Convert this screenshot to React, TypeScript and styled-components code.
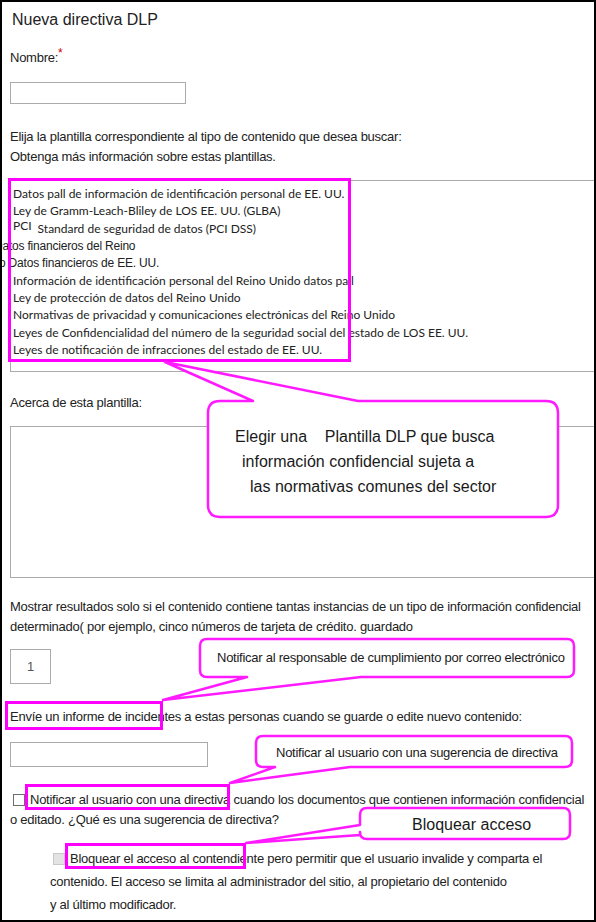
import React from 'react'
import styled, { createGlobalStyle } from 'styled-components'

const GlobalStyle = createGlobalStyle`
    html, body {
        margin: 0;
        padding: 0;
        background: #fff;
    }
    body {
        font-family: "Liberation Sans", Arial, sans-serif;
        color: #222;
    }
`

const Frame = styled.div`
    position: relative;
    width: 596px;
    height: 922px;
    box-sizing: border-box;
    border: 2px solid #000;
    overflow: hidden;
    background: #fff;
`

const Content = styled.div`
    display: flex;
    flex-direction: column;
    align-items: flex-start;
    padding-left: 8px;
    font-size: 13px;
    letter-spacing: -0.25px;
`

const Title = styled.h1`
    margin: 7px 0 0 2px;
    font-size: 16px;
    line-height: 22px;
    font-weight: normal;
    letter-spacing: 0;
`

const Text = styled.p<{ $mt: number; $lh?: number; $indent?: number }>`
    margin: ${p => p.$mt}px 0 0 ${p => p.$indent || 0}px;
    line-height: ${p => p.$lh || 20}px;
    white-space: nowrap;
`

const Required = styled.span`
    color: #c00;
    font-size: 12px;
    vertical-align: 5px;
    line-height: 0;
`

const Field = styled.div<{ $mt: number; $w: number; $h: number }>`
    margin-top: ${p => p.$mt}px;
    width: ${p => p.$w}px;
    height: ${p => p.$h}px;
    flex-shrink: 0;
    box-sizing: border-box;
    border: 1px solid #ababab;
    display: flex;
    align-items: center;
    justify-content: center;
    color: #555;
`

const ListBox = styled.div`
    display: flex;
    flex-direction: column;
    flex-shrink: 0;
    margin-top: 13px;
    width: 600px;
    height: 192px;
    box-sizing: border-box;
    border: 1px solid #ababab;
    border-right: none;
    padding: 4px 0 0 2px;
    font-family: Lato, "Open Sans", sans-serif;
    font-size: 12px;
    letter-spacing: 0;
`

const ListItem = styled.div<{ $shift?: number; $plain?: boolean }>`
    display: flex;
    align-items: center;
    height: 17.3px;
    white-space: nowrap;
    margin-left: ${p => p.$shift || 0}px;
    ${p => p.$plain && `
        font-family: "Liberation Sans", Arial, sans-serif;
        letter-spacing: -0.2px;
    `}
`

const Raised = styled.span`
    align-self: flex-start;
    margin: -1px 6px 0 0;
    line-height: 14px;
`

const CheckRow = styled.div<{ $mt: number; $lh: number; $indent: number }>`
    display: flex;
    flex-direction: column;
    margin: ${p => p.$mt}px 0 0 ${p => p.$indent}px;
    line-height: ${p => p.$lh}px;
    white-space: nowrap;
`

const FirstLine = styled.div`
    display: flex;
    align-items: center;
    gap: 5px;
    padding-left: 3px;
`

const Check = styled.span<{ $disabled?: boolean }>`
    width: 12px;
    height: 12px;
    flex-shrink: 0;
    box-sizing: border-box;
    border: 1px solid ${p => (p.$disabled ? '#c8c8c8' : '#6d6d6d')};
    background: ${p => (p.$disabled ? '#e3e3e3' : '#fff')};
`

const Highlight = styled.div<{ $x: number; $y: number; $w: number; $h: number }>`
    position: absolute;
    left: ${p => p.$x - 2}px;
    top: ${p => p.$y - 2}px;
    width: ${p => p.$w}px;
    height: ${p => p.$h}px;
    box-sizing: border-box;
    border: 3px solid #ff00ff;
    pointer-events: none;
`

const CalloutBox = styled.div<{ $x: number; $y: number; $w: number; $h: number }>`
    position: absolute;
    left: ${p => p.$x - 2}px;
    top: ${p => p.$y - 2}px;
    width: ${p => p.$w}px;
    height: ${p => p.$h}px;
`

const Bubble = styled.svg`
    position: absolute;
    left: 0;
    top: 0;
    overflow: visible;
`

const CalloutText = styled.div<{ $size: number; $lh: number; $top: number }>`
    position: relative;
    display: flex;
    flex-direction: column;
    padding-top: ${p => p.$top}px;
    font-size: ${p => p.$size}px;
    line-height: ${p => p.$lh}px;
    letter-spacing: ${p => (p.$size > 14 ? 0 : -0.25)}px;
    white-space: pre;
    color: #1a1a1a;
`

const CalloutLine = styled.div<{ $indent: number }>`
    padding-left: ${p => p.$indent}px;
`

type Tail = { side: 'top' | 'bottom' | 'left'; a: number; b: number; tx: number; ty: number }

// outline of a rounded box with its pointer, in the box's own coordinates
function bubblePath(w: number, h: number, r: number, t: Tail) {
    const top = t.side === 'top'
        ? `M ${r} 0 L ${t.a} 0 L ${t.tx} ${t.ty} L ${t.b} 0 L ${w - r} 0`
        : `M ${r} 0 L ${w - r} 0`
    const right = `Q ${w} 0 ${w} ${r} L ${w} ${h - r} Q ${w} ${h} ${w - r} ${h}`
    const bottom = t.side === 'bottom'
        ? `L ${t.b} ${h} L ${t.tx} ${t.ty} L ${t.a} ${h} L ${r} ${h}`
        : `L ${r} ${h}`
    const left = t.side === 'left'
        ? `Q 0 ${h} 0 ${h - r} L 0 ${t.b} L ${t.tx} ${t.ty} L 0 ${t.a} L 0 ${r} Q 0 0 ${r} 0 Z`
        : `Q 0 ${h} 0 ${h - r} L 0 ${r} Q 0 0 ${r} 0 Z`
    return `${top} ${right} ${bottom} ${left}`
}

interface CalloutProps {
    x: number
    y: number
    w: number
    h: number
    r: number
    tail: Tail
    size: number
    lh: number
    top: number
    lines: { text: string; indent: number }[]
}

function Callout({ x, y, w, h, r, tail, size, lh, top, lines }: CalloutProps) {
    return (
        <CalloutBox $x={x} $y={y} $w={w} $h={h}>
            <Bubble width={w} height={h}>
                <path d={bubblePath(w, h, r, tail)} fill="#fff" stroke="#ff1aff" strokeWidth={2.5} strokeLinejoin="round" />
            </Bubble>
            <CalloutText $size={size} $lh={lh} $top={top}>
                {lines.map((l, i) => (
                    <CalloutLine key={i} $indent={l.indent}>{l.text}</CalloutLine>
                ))}
            </CalloutText>
        </CalloutBox>
    )
}

const templates: { text: string; shift?: number; plain?: boolean; pci?: boolean }[] = [
    { text: 'Datos pall de información de identificación personal de EE. UU.' },
    { text: 'Ley de Gramm-Leach-Bliley de LOS EE. UU. (GLBA)' },
    { text: 'Standard de seguridad de datos (PCI DSS)', pci: true },
    { text: 'Datos financieros del Reino', shift: -19, plain: true },
    { text: 'o Datos financieros de EE. UU.', shift: -14, plain: true },
    { text: 'Información de identificación personal del Reino Unido datos pall' },
    { text: 'Ley de protección de datos del Reino Unido' },
    { text: 'Normativas de privacidad y comunicaciones electrónicas del Reino Unido' },
    { text: 'Leyes de Confidencialidad del número de la seguridad social del estado de LOS EE. UU.' },
    { text: 'Leyes de notificación de infracciones del estado de EE. UU.' },
]

export default function App() {
    return (
        <>
            <GlobalStyle />
            <Frame>
                <Content>
                    <Title>Nueva directiva DLP</Title>
                    <Text $mt={17}>Nombre:<Required>*</Required></Text>
                    <Field $mt={14} $w={176} $h={22} />

                    <Text $mt={23}>
                        Elija la plantilla correspondiente al tipo de contenido que desea buscar:<br />
                        Obtenga más información sobre estas plantillas.
                    </Text>

                    <ListBox>
                        {templates.map((t, i) => (
                            <ListItem key={i} $shift={t.shift} $plain={t.plain}>
                                {t.pci && <Raised>PCI</Raised>}
                                {t.text}
                            </ListItem>
                        ))}
                    </ListBox>

                    <Text $mt={21}>Acerca de esta plantilla:</Text>
                    <Field $mt={13} $w={600} $h={152} />

                    <Text $mt={19}>
                        Mostrar resultados solo si el contenido contiene tantas instancias de un tipo de información confidencial<br />
                        determinado( por ejemplo, cinco números de tarjeta de crédito. guardado
                    </Text>
                    <Field $mt={12} $w={41} $h={35}>1</Field>

                    <Text $mt={23}>Envíe un informe de incidentes a estas personas cuando se guarde o edite nuevo contenido:</Text>
                    <Field $mt={15} $w={198} $h={25} />

                    <CheckRow $mt={23} $lh={20} $indent={0}>
                        <FirstLine>
                            <Check />Notificar al usuario con una directiva cuando los documentos que contienen información confidencial
                        </FirstLine>
                        <div>o editado. ¿Qué es una sugerencia de directiva?</div>
                    </CheckRow>

                    <CheckRow $mt={17} $lh={23} $indent={40}>
                        <FirstLine>
                            <Check $disabled />Bloquear el acceso al contendiente pero permitir que el usuario invalide y comparta el
                        </FirstLine>
                        <div>contenido. El acceso se limita al administrador del sitio, al propietario del contenido</div>
                        <div>y al último modificador.</div>
                    </CheckRow>
                </Content>

                <Highlight $x={8} $y={178} $w={343} $h={184} />
                <Highlight $x={5} $y={701} $w={158} $h={29} />
                <Highlight $x={25} $y={784} $w={205} $h={26} />
                <Highlight $x={65} $y={843} $w={181} $h={26} />

                <Callout
                    x={208} y={401} w={350} h={116} r={12}
                    tail={{ side: 'top', a: 45, b: 150, tx: -43, ty: -39 }}
                    size={16} lh={25} top={23}
                    lines={[
                        { text: 'Elegir una    Plantilla DLP que busca', indent: 27 },
                        { text: 'información confidencial sujeta a', indent: 34 },
                        { text: 'las normativas comunes del sector', indent: 42 },
                    ]}
                />
                <Callout
                    x={200} y={639} w={374} h={38} r={7}
                    tail={{ side: 'bottom', a: 47, b: 161, tx: -37, ty: 61 }}
                    size={13} lh={20} top={9}
                    lines={[{ text: 'Notificar al responsable de cumplimiento por correo electrónico', indent: 17 }]}
                />
                <Callout
                    x={256} y={736} w={316} h={31} r={7}
                    tail={{ side: 'bottom', a: 19, b: 94, tx: -26, ty: 47 }}
                    size={13} lh={20} top={7}
                    lines={[{ text: 'Notificar al usuario con una sugerencia de directiva', indent: 20 }]}
                />
                <Callout
                    x={360} y={808} w={210} h={31} r={7}
                    tail={{ side: 'left', a: 17, b: 27, tx: -114, ty: 35 }}
                    size={16} lh={22} top={6}
                    lines={[{ text: 'Bloquear acceso', indent: 52 }]}
                />
            </Frame>
        </>
    )
}
